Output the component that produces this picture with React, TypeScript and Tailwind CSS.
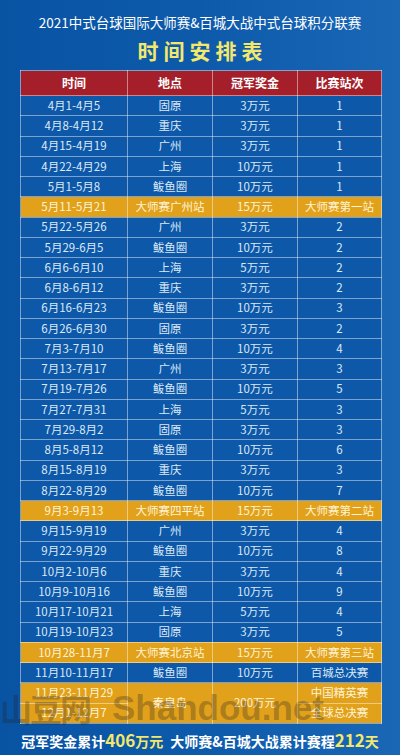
type Row = {
  time: string;
  place: string;
  prize: string;
  stage: string;
  gold?: boolean;
};

const rows: Row[] = [
  { time: "4月1-4月5", place: "固原", prize: "3万元", stage: "1" },
  { time: "4月8-4月12", place: "重庆", prize: "3万元", stage: "1" },
  { time: "4月15-4月19", place: "广州", prize: "3万元", stage: "1" },
  { time: "4月22-4月29", place: "上海", prize: "10万元", stage: "1" },
  { time: "5月1-5月8", place: "鲅鱼圈", prize: "10万元", stage: "1" },
  { time: "5月11-5月21", place: "大师赛广州站", prize: "15万元", stage: "大师赛第一站", gold: true },
  { time: "5月22-5月26", place: "广州", prize: "3万元", stage: "2" },
  { time: "5月29-6月5", place: "鲅鱼圈", prize: "10万元", stage: "2" },
  { time: "6月6-6月10", place: "上海", prize: "5万元", stage: "2" },
  { time: "6月8-6月12", place: "重庆", prize: "3万元", stage: "2" },
  { time: "6月16-6月23", place: "鲅鱼圈", prize: "10万元", stage: "3" },
  { time: "6月26-6月30", place: "固原", prize: "3万元", stage: "2" },
  { time: "7月3-7月10", place: "鲅鱼圈", prize: "10万元", stage: "4" },
  { time: "7月13-7月17", place: "广州", prize: "3万元", stage: "3" },
  { time: "7月19-7月26", place: "鲅鱼圈", prize: "10万元", stage: "5" },
  { time: "7月27-7月31", place: "上海", prize: "5万元", stage: "3" },
  { time: "7月29-8月2", place: "固原", prize: "3万元", stage: "3" },
  { time: "8月5-8月12", place: "鲅鱼圈", prize: "10万元", stage: "6" },
  { time: "8月15-8月19", place: "重庆", prize: "3万元", stage: "3" },
  { time: "8月22-8月29", place: "鲅鱼圈", prize: "10万元", stage: "7" },
  { time: "9月3-9月13", place: "大师赛四平站", prize: "15万元", stage: "大师赛第二站", gold: true },
  { time: "9月15-9月19", place: "广州", prize: "3万元", stage: "4" },
  { time: "9月22-9月29", place: "鲅鱼圈", prize: "10万元", stage: "8" },
  { time: "10月2-10月6", place: "重庆", prize: "3万元", stage: "4" },
  { time: "10月9-10月16", place: "鲅鱼圈", prize: "10万元", stage: "9" },
  { time: "10月17-10月21", place: "上海", prize: "5万元", stage: "4" },
  { time: "10月19-10月23", place: "固原", prize: "3万元", stage: "5" },
  { time: "10月28-11月7", place: "大师赛北京站", prize: "15万元", stage: "大师赛第三站", gold: true },
  { time: "11月10-11月17", place: "鲅鱼圈", prize: "10万元", stage: "百城总决赛" },
];

const cell = "border border-white/45 p-0 text-center align-middle leading-none";

export default function App() {
  return (
    <div
      className="relative w-[400px] h-[755px] overflow-hidden bg-gradient-to-r from-[#0953a3] via-[#0d5aab] to-[#1a67b6]"
      style={{ fontFamily: '"Noto Sans CJK SC", "Noto Sans", sans-serif' }}
    >
      {/* Title */}
      <div className="pt-[12px] text-center text-[13.5px] leading-[20px] text-white">
        2021中式台球国际大师赛&amp;百城大战中式台球积分联赛
      </div>
      <div className="mt-[5px] text-center text-[21px] leading-[26px] font-bold tracking-[5px] pl-[5px] text-[#f3e86c]">
        时间安排表
      </div>

      {/* Schedule table */}
      <table className="ml-[20px] mt-[7px] w-[361px] border-collapse table-fixed">
        <colgroup>
          <col className="w-[107px]" />
          <col className="w-[85px]" />
          <col className="w-[85px]" />
          <col className="w-[84px]" />
        </colgroup>
        <thead>
          <tr className="h-[25px] bg-[#a41f2a] text-[12px] font-bold text-white">
            <th className={cell}>时间</th>
            <th className={cell}>地点</th>
            <th className={cell}>冠军奖金</th>
            <th className={cell}>比赛站次</th>
          </tr>
        </thead>
        <tbody className="text-[11.5px]">
          {rows.map((r) => (
            <tr
              key={r.time}
              className={
                r.gold
                  ? "h-[20.25px] bg-[#e2a11b] text-[#fff4d6]"
                  : "h-[20.25px] bg-[#0d58a8] text-[#dbe9f7]"
              }
            >
              <td className={cell}>{r.time}</td>
              <td className={cell}>{r.place}</td>
              <td className={cell}>{r.prize}</td>
              <td className={cell}>{r.stage}</td>
            </tr>
          ))}
          <tr className="h-[20.25px] bg-[#e2a11b] text-[#fff4d6]">
            <td className={cell}>11月23-11月29</td>
            <td className={cell} rowSpan={2}>
              秦皇岛
            </td>
            <td className={cell} rowSpan={2}>
              200万元
            </td>
            <td className={cell}>中国精英赛</td>
          </tr>
          <tr className="h-[20.25px] bg-[#e2a11b] text-[#fff4d6]">
            <td className={cell}>12月1-12月7</td>
            <td className={cell}>全球总决赛</td>
          </tr>
        </tbody>
      </table>

      {/* Summary */}
      <div className="mt-[4px] flex items-baseline justify-center text-[14px] font-bold text-white leading-[24px]">
        <span>冠军奖金累计</span>
        <span className="text-[17px] text-[#f3e86c]">406</span>
        <span className="text-[#f3e86c]">万元</span>
        <span className="ml-[7px]">大师赛&amp;百城大战累计赛程</span>
        <span className="text-[17px] text-[#f3e86c]">212</span>
        <span className="text-[#f3e86c]">天</span>
      </div>

      {/* Watermark */}
      <div className="pointer-events-none absolute left-[0px] top-[690px] flex items-center gap-[22px] font-bold leading-none text-[#222222]/30">
        <span className="text-[32px] tracking-[-2px]">山豆网</span>
        <span className="text-[35px]" style={{ fontFamily: '"Liberation Sans", sans-serif' }}>
          Shandou.net
        </span>
      </div>
    </div>
  );
}
